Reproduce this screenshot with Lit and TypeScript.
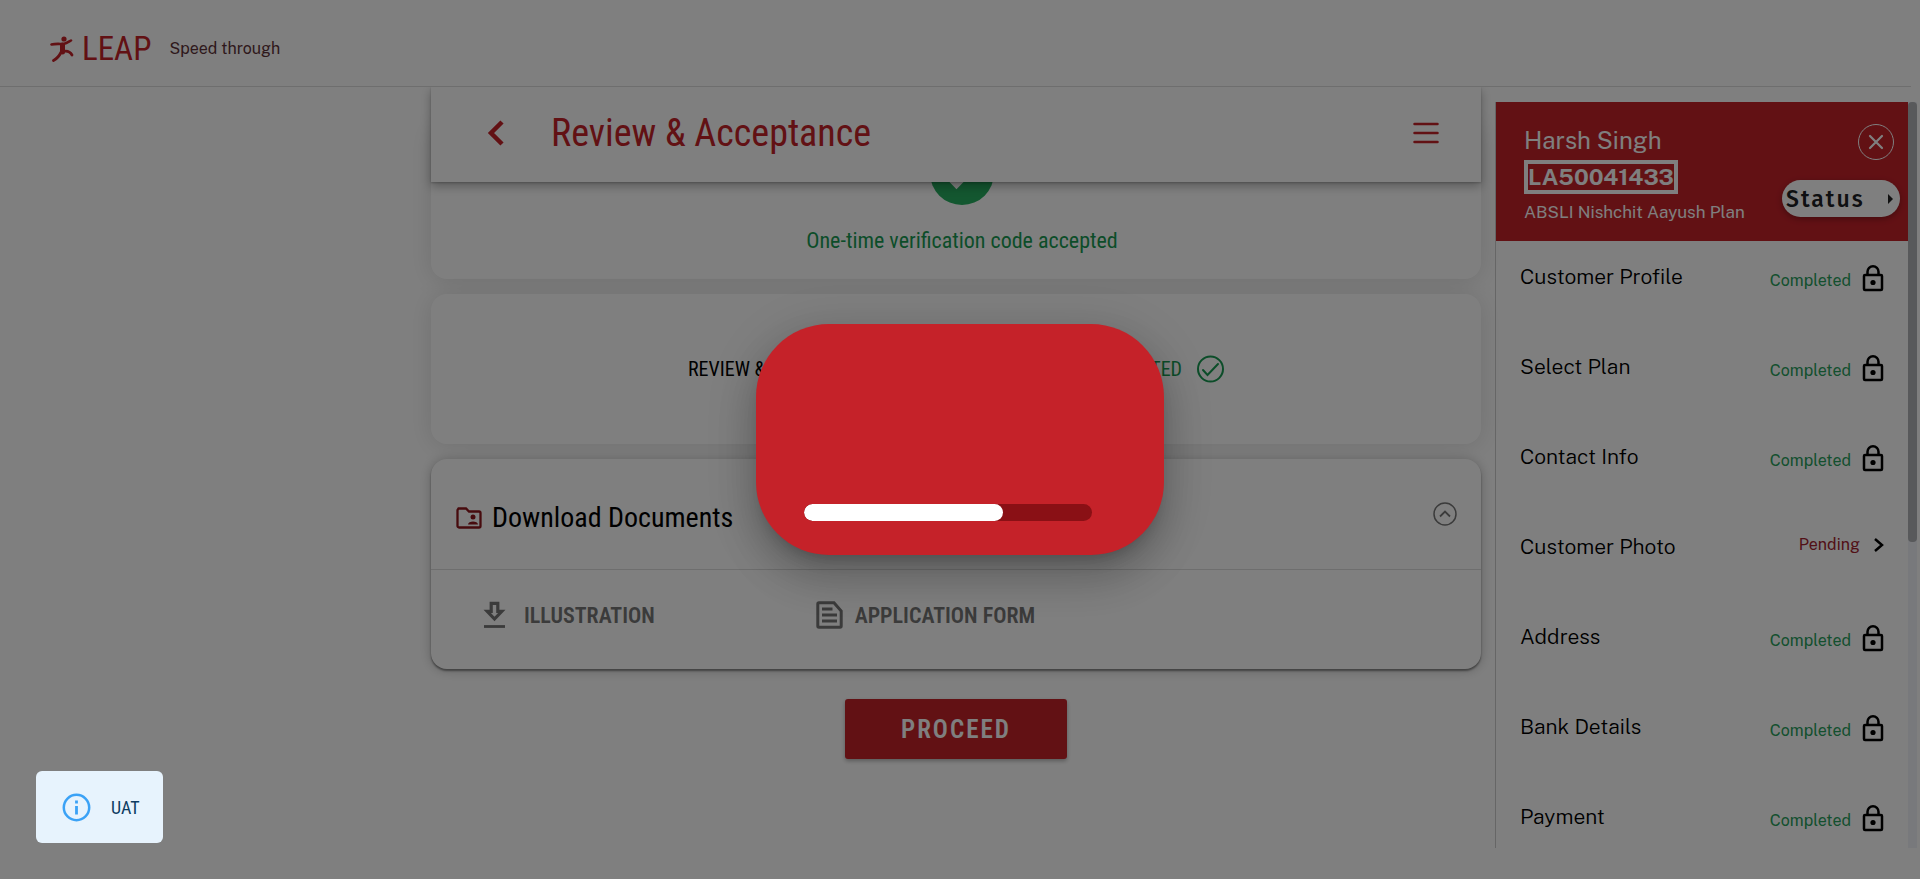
import { LitElement, html, css, svg } from "lit";
import { customElement, property } from "lit/decorators.js";

type Step = { name: string; done: boolean };

const STEPS: Step[] = [
  { name: "Customer Profile", done: true },
  { name: "Select Plan", done: true },
  { name: "Contact Info", done: true },
  { name: "Customer Photo", done: false },
  { name: "Address", done: true },
  { name: "Bank Details", done: true },
  { name: "Payment", done: true },
];

const lockIcon = svg`
  <rect x="2" y="10" width="18" height="15" rx="1" fill="none" stroke="#000" stroke-width="2.500"/>
  <path d="M5.500 10V6.800a5.500 5.500 0 0 1 11 0V10" fill="none" stroke="#000" stroke-width="2.500"/>
  <circle cx="11" cy="17.500" r="2.600" fill="#000"/>`;

@customElement("journey-panel")
class JourneyPanel extends LitElement {
  @property({ attribute: false }) steps: Step[] = [];

  static styles = css`
    :host {
      display: grid;
      grid-template-columns: minmax(0, 1fr) 9px;
      border-left: 1px solid #ccc;
      box-sizing: border-box;
      font-family: "Public Sans", Inter, "Liberation Sans", sans-serif;
      overflow: hidden;
    }
    .body { overflow: hidden; min-height: 0; }
    .head {
      display: flex;
      justify-content: space-between;
      background: #c52229;
      color: #fff;
      height: 139px;
      box-sizing: border-box;
      padding: 22px 8px 0 28px;
    }
    .who { display: flex; flex-direction: column; align-items: flex-start; }
    .name { font-size: 24px; line-height: 32px; margin: 0; font-weight: 400; }
    .code {
      border: 4px solid #fff;
      font-size: 23px;
      line-height: 26px;
      font-weight: 700;
      margin-top: 4px;
    }
    .plan { font-size: 17px; line-height: 20px; margin-top: 8px; }
    .actions { display: flex; flex-direction: column; align-items: flex-end; gap: 20px; }
    button { font: inherit; cursor: pointer; }
    .close {
      width: 36px;
      height: 36px;
      border: 1px solid #fff;
      border-radius: 50%;
      background: none;
      padding: 0;
      display: grid;
      place-items: center;
      margin-right: 6px;
    }
    .status {
      display: flex;
      align-items: center;
      justify-content: space-between;
      width: 118px;
      height: 37px;
      padding: 0 7px 0 4px;
      border: 0;
      border-radius: 19px;
      background: #fff;
      color: #1d2124;
      font-family: "Fira Sans", "Noto Sans", "Open Sans", sans-serif;
      font-weight: 500;
      font-size: 23px;
      letter-spacing: 2px;
      box-shadow: 0 2px 6px rgba(0, 0, 0, 0.3);
    }
    .steps { list-style: none; margin: 0; padding: 0; }
    .step {
      height: 90px;
      box-sizing: border-box;
      display: flex;
      align-items: flex-start;
      justify-content: space-between;
      padding: 24px 24px 0 24px;
    }
    .label { font-size: 21px; line-height: 24px; color: #000; font-weight: 300; text-decoration: none; }
    .state { display: flex; align-items: center; gap: 11px; font-size: 16px; line-height: 20px; color: #28a05c; }
    .state span { padding-top: 4px; }
    .state.pending { color: #a5222f; gap: 14px; }
    .state.pending span { padding: 0; }
    .track { background: #f1f3f8; }
    .thumb { height: 59%; background: #b0b2b6; border-radius: 4px; }
    svg { display: block; }
  `;

  render() {
    return html`
      <div class="body">
        <div class="head">
          <div class="who">
            <h2 class="name">Harsh Singh</h2>
            <div class="code">LA50041433</div>
            <div class="plan">ABSLI Nishchit Aayush Plan</div>
          </div>
          <div class="actions">
            <button class="close" aria-label="Close">
              <svg width="16" height="16" viewBox="0 0 16 16"><path d="M2 2l12 12M14 2L2 14" stroke="#fff" stroke-width="2.200" stroke-linecap="round"/></svg>
            </button>
            <button class="status">Status
              <svg width="5" height="10" viewBox="0 0 5 10"><path d="M0 0l5 5-5 5z" fill="#222"/></svg>
            </button>
          </div>
        </div>
        <ul class="steps">
          ${this.steps.map(
            (s) => html`<li class="step">
              <a class="label" href="#">${s.name}</a>
              ${s.done
                ? html`<div class="state"><span>Completed</span>
                    <svg width="22" height="27" viewBox="0 0 22 27">${lockIcon}</svg></div>`
                : html`<div class="state pending"><span>Pending</span>
                    <svg width="10" height="16" viewBox="0 0 10 16"><path d="M1 2l7 6-7 6" fill="none" stroke="#000" stroke-width="2.500"/></svg></div>`}
            </li>`
          )}
        </ul>
      </div>
      <div class="track"><div class="thumb"></div></div>
    `;
  }
}

@customElement("app-root")
class AppRoot extends LitElement {
  static styles = css`
    :host {
      display: flex;
      flex-direction: column;
      height: 100vh;
      overflow: hidden;
      background: #fff;
      color: #000;
      font-family: "Liberation Sans Narrow", "Roboto Condensed", "Liberation Sans", sans-serif;
    }
    svg { display: block; }
    button { font: inherit; cursor: pointer; }
    .top {
      position: relative;
      z-index: 2;
      display: flex;
      align-items: center;
      flex: none;
      height: 87px;
      margin-right: 9px;
      padding: 11px 50px 0;
      box-sizing: border-box;
      background: #fff;
      border-bottom: 1px solid #ddd;
    }
    .brand { display: flex; align-items: center; gap: 8px; color: #c52229; font-size: 33px; line-height: 36px; text-decoration: none; }
    .tag { margin-left: 18px; font: 16px/20px "Public Sans", Inter, sans-serif; color: #5d3238; }
    .page {
      flex: 1;
      min-height: 0;
      display: grid;
      grid-template-columns: minmax(0, 9fr) minmax(0, 22fr) minmax(0, 9fr);
      padding-right: 9px;
    }
    .main { grid-column: 2; display: flex; flex-direction: column; margin-left: 1px; }
    .title {
      position: relative;
      z-index: 1;
      display: flex;
      align-items: center;
      height: 95px;
      box-sizing: border-box;
      padding: 0 42px 4px 56px;
      background: #fff;
      box-shadow: 0 4px 10px rgba(0, 0, 0, 0.3), 0 1px 2px rgba(0, 0, 0, 0.2);
      color: #c52229;
    }
    .title h1 { flex: 1; margin: 0 0 0 46px; font-size: 38px; line-height: 44px; font-weight: 400; }
    .icon { border: 0; background: none; padding: 0; display: block; }
    .card { background: #fff; border-radius: 16px; box-shadow: 0 2px 24px rgba(0, 0, 0, 0.12); }
    .accepted {
      margin-top: -60px;
      padding: 19px 0 24px 12px;
      display: flex;
      flex-direction: column;
      align-items: center;
      gap: 22px;
      color: #189b53;
      font-size: 22px;
      line-height: 28px;
    }
    .accepted p { margin: 0; }
    .review {
      margin-top: 15px;
      height: 150px;
      display: flex;
      align-items: center;
      justify-content: center;
      font-size: 20px;
      line-height: 24px;
    }
    .pair { display: flex; justify-content: space-between; width: 494px; }
    .green { color: #189b53; }
    .review svg { margin-left: 15px; }
    .docs { margin-top: 15px; box-shadow: 0 2px 2px rgba(0, 0, 0, 0.4), 0 1px 12px rgba(0, 0, 0, 0.25); }
    .docs-head {
      display: flex;
      align-items: center;
      height: 111px;
      box-sizing: border-box;
      padding: 8px 24px 0 25px;
      border-bottom: 1px solid #ddd;
    }
    .docs-head h2 { flex: 1; margin: 0 0 0 10px; font-size: 28px; line-height: 32px; font-weight: 400; }
    .docs-head .icon { padding-bottom: 8px; }
    .links {
      display: grid;
      grid-template-columns: repeat(3, minmax(0, 1fr));
      height: 99px;
      box-sizing: border-box;
      padding: 30px 0 0 52px;
    }
    .link {
      display: flex;
      align-items: center;
      gap: 12px;
      height: 30px;
      color: #777;
      font-weight: 600;
      font-size: 22px;
      text-decoration: none;
    }
    .wide { gap: 18px; }
    .proceed {
      align-self: center;
      margin-top: 30px;
      width: 222px;
      height: 60px;
      border: 0;
      border-radius: 3px;
      background: #c52229;
      color: #fff;
      font-size: 25px;
      font-weight: 600;
      letter-spacing: 2px;
      box-shadow: 0 2px 4px rgba(0, 0, 0, 0.3);
    }
    journey-panel { margin: 15px -6px 31px 14px; }
    .veil {
      position: absolute;
      inset: 0;
      z-index: 3;
      display: grid;
      place-items: center;
      background: rgba(0, 0, 0, 0.5);
    }
    .loader {
      width: 408px;
      height: 231px;
      box-sizing: border-box;
      padding: 0 72px 34px 48px;
      display: flex;
      align-items: flex-end;
      border-radius: 73px;
      background: #c52229;
      box-shadow: 0 11px 15px -7px rgba(0, 0, 0, 0.2), 0 24px 38px 3px rgba(0, 0, 0, 0.14), 0 9px 46px 8px rgba(0, 0, 0, 0.12);
    }
    .bar { flex: 1; height: 17px; border-radius: 9px; background: #8a1015; overflow: hidden; }
    .fill { height: 100%; border-radius: 9px; background: #fff; }
    .toast {
      position: absolute;
      z-index: 4;
      left: 36px;
      bottom: 36px;
      display: flex;
      align-items: center;
      gap: 20px;
      width: 127px;
      height: 72px;
      box-sizing: border-box;
      padding-left: 26px;
      border-radius: 6px;
      background: #e7f3fd;
      color: #0d3c61;
      font-size: 18px;
    }
  `;

  render() {
    return html`
      <header class="top">
        <a class="brand" href="#">
          <svg width="24" height="26" viewBox="0 0 24 26" fill="none" stroke="#c52229" stroke-linecap="round" stroke-linejoin="round">
            <circle cx="14" cy="3" r="2.600" fill="#c52229" stroke="none"/>
            <path d="M1.500 8.500c4-1 8-.5 12-.5 3-.5 5-2 7.500-3.500" stroke-width="2.600"/>
            <path d="M12.500 9v7" stroke-width="5"/>
            <path d="M11.500 15.500c-2 4-4 7-8 9" stroke-width="2.800"/>
            <path d="M13 15.500c4-1 7 0 9 3.500" stroke-width="2.800"/>
          </svg>
          LEAP
        </a>
        <span class="tag">Speed through</span>
      </header>
      <div class="page">
        <main class="main">
          <div class="title">
            <button class="icon" aria-label="Back">
              <svg width="18" height="26" viewBox="0 0 18 26"><path d="M15 2L4 13l11 11" fill="none" stroke="#c52229" stroke-width="4.500"/></svg>
            </button>
            <h1>Review &amp; Acceptance</h1>
            <button class="icon" aria-label="Menu">
              <svg width="26" height="22" viewBox="0 0 26 22"><path d="M1.500 2h23M1.500 11h23M1.500 20h23" stroke="#c52229" stroke-width="2.500" stroke-linecap="round"/></svg>
            </button>
          </div>
          <section class="card accepted">
            <svg width="64" height="64" viewBox="0 0 64 64"><circle cx="32" cy="32" r="32" fill="#27ae60"/><path d="M13 30l13.500 14L49 21" fill="none" stroke="#fff" stroke-width="6"/></svg>
            <p>One-time verification code accepted</p>
          </section>
          <section class="card review">
            <div class="pair"><span>REVIEW &amp; ACCEPTANCE</span><span class="green">COMPLETED</span></div>
            <svg width="27" height="28" viewBox="0 0 27 28" fill="none" stroke="#189b53" stroke-width="2"><circle cx="13.500" cy="14" r="12.500"/><path d="M6 15l4.500 5L21 9" stroke-linecap="round"/></svg>
          </section>
          <section class="card docs">
            <div class="docs-head">
              <svg width="26" height="22" viewBox="0 0 26 22"><path d="M2.500 1.500H10l3 3h10a1.500 1.500 0 0 1 1.500 1.500v13a1.500 1.500 0 0 1-1.500 1.500H3A1.500 1.500 0 0 1 1.500 19V3z" fill="none" stroke="#8f171d" stroke-width="2.300"/><circle cx="17" cy="10" r="2.500" fill="#8f171d"/><path d="M12 17.500c0-4 10-4 10 0z" fill="#8f171d"/></svg>
              <h2>Download Documents</h2>
              <button class="icon" aria-label="Collapse">
                <svg width="24" height="24" viewBox="0 0 24 24" fill="none" stroke="#777"><circle cx="12" cy="12" r="11" stroke-width="1.500"/><path d="M7 14.500l5-5 5 5" stroke-width="1.800"/></svg>
              </button>
            </div>
            <nav class="links">
              <a class="link wide" href="#">
                <svg width="23" height="28" viewBox="0 0 23 28" fill="none" stroke="#777"><path d="M8.200 2.300h6.600v8h4L11.500 18 4.200 10.300h4z" stroke-width="3.200"/><path d="M1 25.500h21" stroke-width="2.800"/></svg>
                ILLUSTRATION
              </a>
              <a class="link" href="#">
                <svg width="27" height="28" viewBox="0 0 27 28" fill="none" stroke="#777" stroke-width="3"><path d="M3 1.800h15l7.200 8.200v15q0 1.200-1.200 1.200H3q-1.200 0-1.200-1.200V3q0-1.200 1.200-1.200z"/><path d="M6 8h10.500M6 14h15M6 20h15"/></svg>
                APPLICATION FORM
              </a>
            </nav>
          </section>
          <button class="proceed">PROCEED</button>
        </main>
        <journey-panel .steps=${STEPS}></journey-panel>
      </div>
      <div class="veil">
        <div class="loader">
          <div class="bar" role="progressbar" aria-label="Loading" aria-valuenow="69"><div class="fill" style="width: 69%"></div></div>
        </div>
      </div>
      <div class="toast" role="status">
        <svg width="29" height="29" viewBox="0 0 29 29"><circle cx="14.500" cy="14.500" r="12.700" fill="none" stroke="#3ba2f6" stroke-width="2.500"/><path d="M14.500 13v8.500M14.500 7.500v3" stroke="#3ba2f6" stroke-width="2.800"/></svg>
        UAT
      </div>
    `;
  }
}
